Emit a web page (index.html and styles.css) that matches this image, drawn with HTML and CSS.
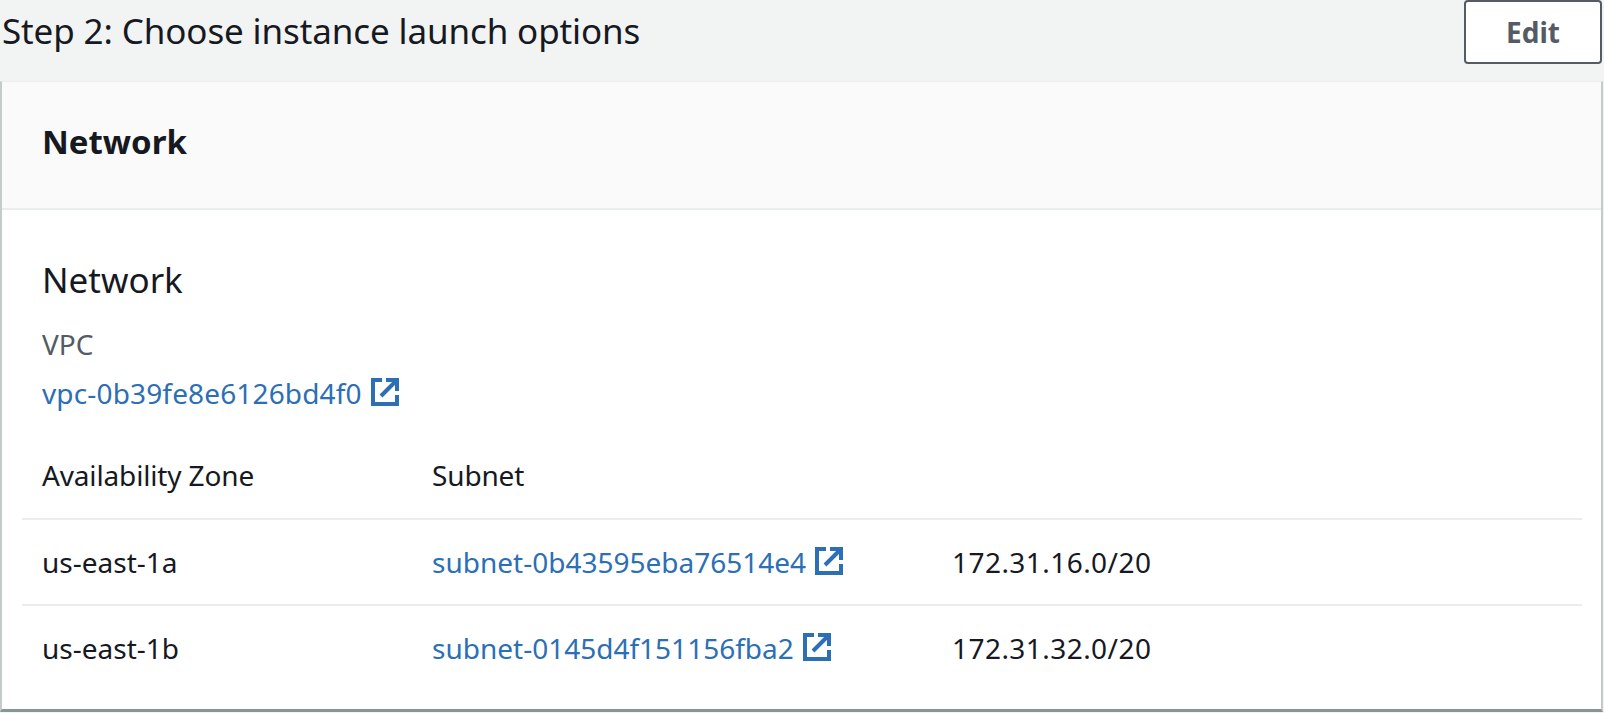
FILE: index.html
```html
<!DOCTYPE html>
<html>
<head>
<title>Step 2</title>
<link rel="stylesheet" href="styles.css">
</head>
<body>

<div class="step-header">
    <h2 class="step-title">Step 2: Choose instance launch options</h2>
    <button class="edit-button">Edit</button>
</div>

<div class="card">
    <div class="card-header">Network</div>
    <div class="card-body">
        <div class="section-title">Network</div>
        <div class="field-label">VPC</div>
        <div class="field-value">
            <a href="#" class="ext-link vpc-link">vpc-0b39fe8e6126bd4f0<svg class="ext-icon" viewBox="0 0 28 28"><path d="M11 2H2v24h24v-9M15 2h11v11M26 2L10 18" fill="none" stroke="currentColor" stroke-width="4"/></svg></a>
        </div>
        <table class="zones">
            <thead>
                <tr>
                    <th class="col-zone">Availability Zone</th>
                    <th class="col-subnet">Subnet</th>
                    <th></th>
                </tr>
            </thead>
            <tbody>
                <tr>
                    <td>us-east-1a</td>
                    <td><a href="#" class="ext-link">subnet-0b43595eba76514e4<svg class="ext-icon" viewBox="0 0 28 28"><path d="M11 2H2v24h24v-9M15 2h11v11M26 2L10 18" fill="none" stroke="currentColor" stroke-width="4"/></svg></a></td>
                    <td class="cidr">172.31.16.0/20</td>
                </tr>
                <tr>
                    <td>us-east-1b</td>
                    <td><a href="#" class="ext-link">subnet-0145d4f151156fba2<svg class="ext-icon" viewBox="0 0 28 28"><path d="M11 2H2v24h24v-9M15 2h11v11M26 2L10 18" fill="none" stroke="currentColor" stroke-width="4"/></svg></a></td>
                    <td class="cidr">172.31.32.0/20</td>
                </tr>
            </tbody>
        </table>
    </div>
</div>

</body>
</html>
```
FILE: styles.css
```css
html, body {
    height: 100%;
}
body {
    margin: 0;
    background-color: #f2f3f3;
    color: #16191f;
    font-family: "Noto Sans", Arial, sans-serif;
    overflow: hidden;
}
.step-header {
    display: flex;
    justify-content: space-between;
    align-items: flex-start;
    height: 81px;
    padding: 0 2px 0 2px;
}
.step-title {
    margin: 10px 0 0;
    font-size: 35px;
    line-height: 42px;
    font-weight: 400;
    letter-spacing: -0.12px;
}
.edit-button {
    width: 138px;
    height: 64px;
    background-color: #fff;
    border: 2px solid #545b64;
    border-radius: 4px;
    color: #545b64;
    font-family: inherit;
    font-size: 28px;
    font-weight: 700;
}
.card {
    margin: 0 1px 0 0;
    height: 631px;
    box-sizing: border-box;
    background-color: #fff;
    border-top: 1px solid #eaeded;
    border-left: 2px solid #c5caca;
    border-right: 2px solid #c5caca;
    border-bottom: 3px solid #879596;
}
.card-header {
    height: 126px;
    padding-left: 40px;
    background-color: #fafafa;
    border-bottom: 2px solid #eaeded;
    font-size: 33px;
    font-weight: 700;
    line-height: 120px;
}
.card-body {
    padding-top: 49px;
}
.section-title {
    padding-left: 40px;
    font-size: 35px;
    line-height: 42px;
}
.field-label {
    margin-top: 26px;
    padding-left: 40px;
    color: #545b64;
    font-size: 28px;
    line-height: 34px;
}
.field-value {
    margin-top: 15px;
    padding-left: 40px;
    font-size: 28px;
    line-height: 34px;
}
.ext-link {
    color: #2c6fb5;
    text-decoration: none;
}
.vpc-link {
    letter-spacing: 0.15px;
}
.ext-icon {
    width: 28px;
    height: 28px;
    margin-left: 9px;
    vertical-align: -2px;
}
.zones {
    width: 1560px;
    margin: 24px 0 0 20px;
    border-collapse: collapse;
    font-size: 28px;
}
.zones th {
    height: 82px;
    padding: 0 0 2px 20px;
    border-bottom: 2px solid #eaeded;
    font-weight: 400;
    text-align: left;
    letter-spacing: -0.15px;
}
.zones td {
    height: 84px;
    padding: 0 0 0 20px;
    border-bottom: 2px solid #eaeded;
}
.zones tr:last-child td {
    border-bottom: none;
}
.zones .cidr {
    letter-spacing: 0.45px;
}
.col-zone {
    width: 370px;
}
.col-subnet {
    width: 500px;
}
```
